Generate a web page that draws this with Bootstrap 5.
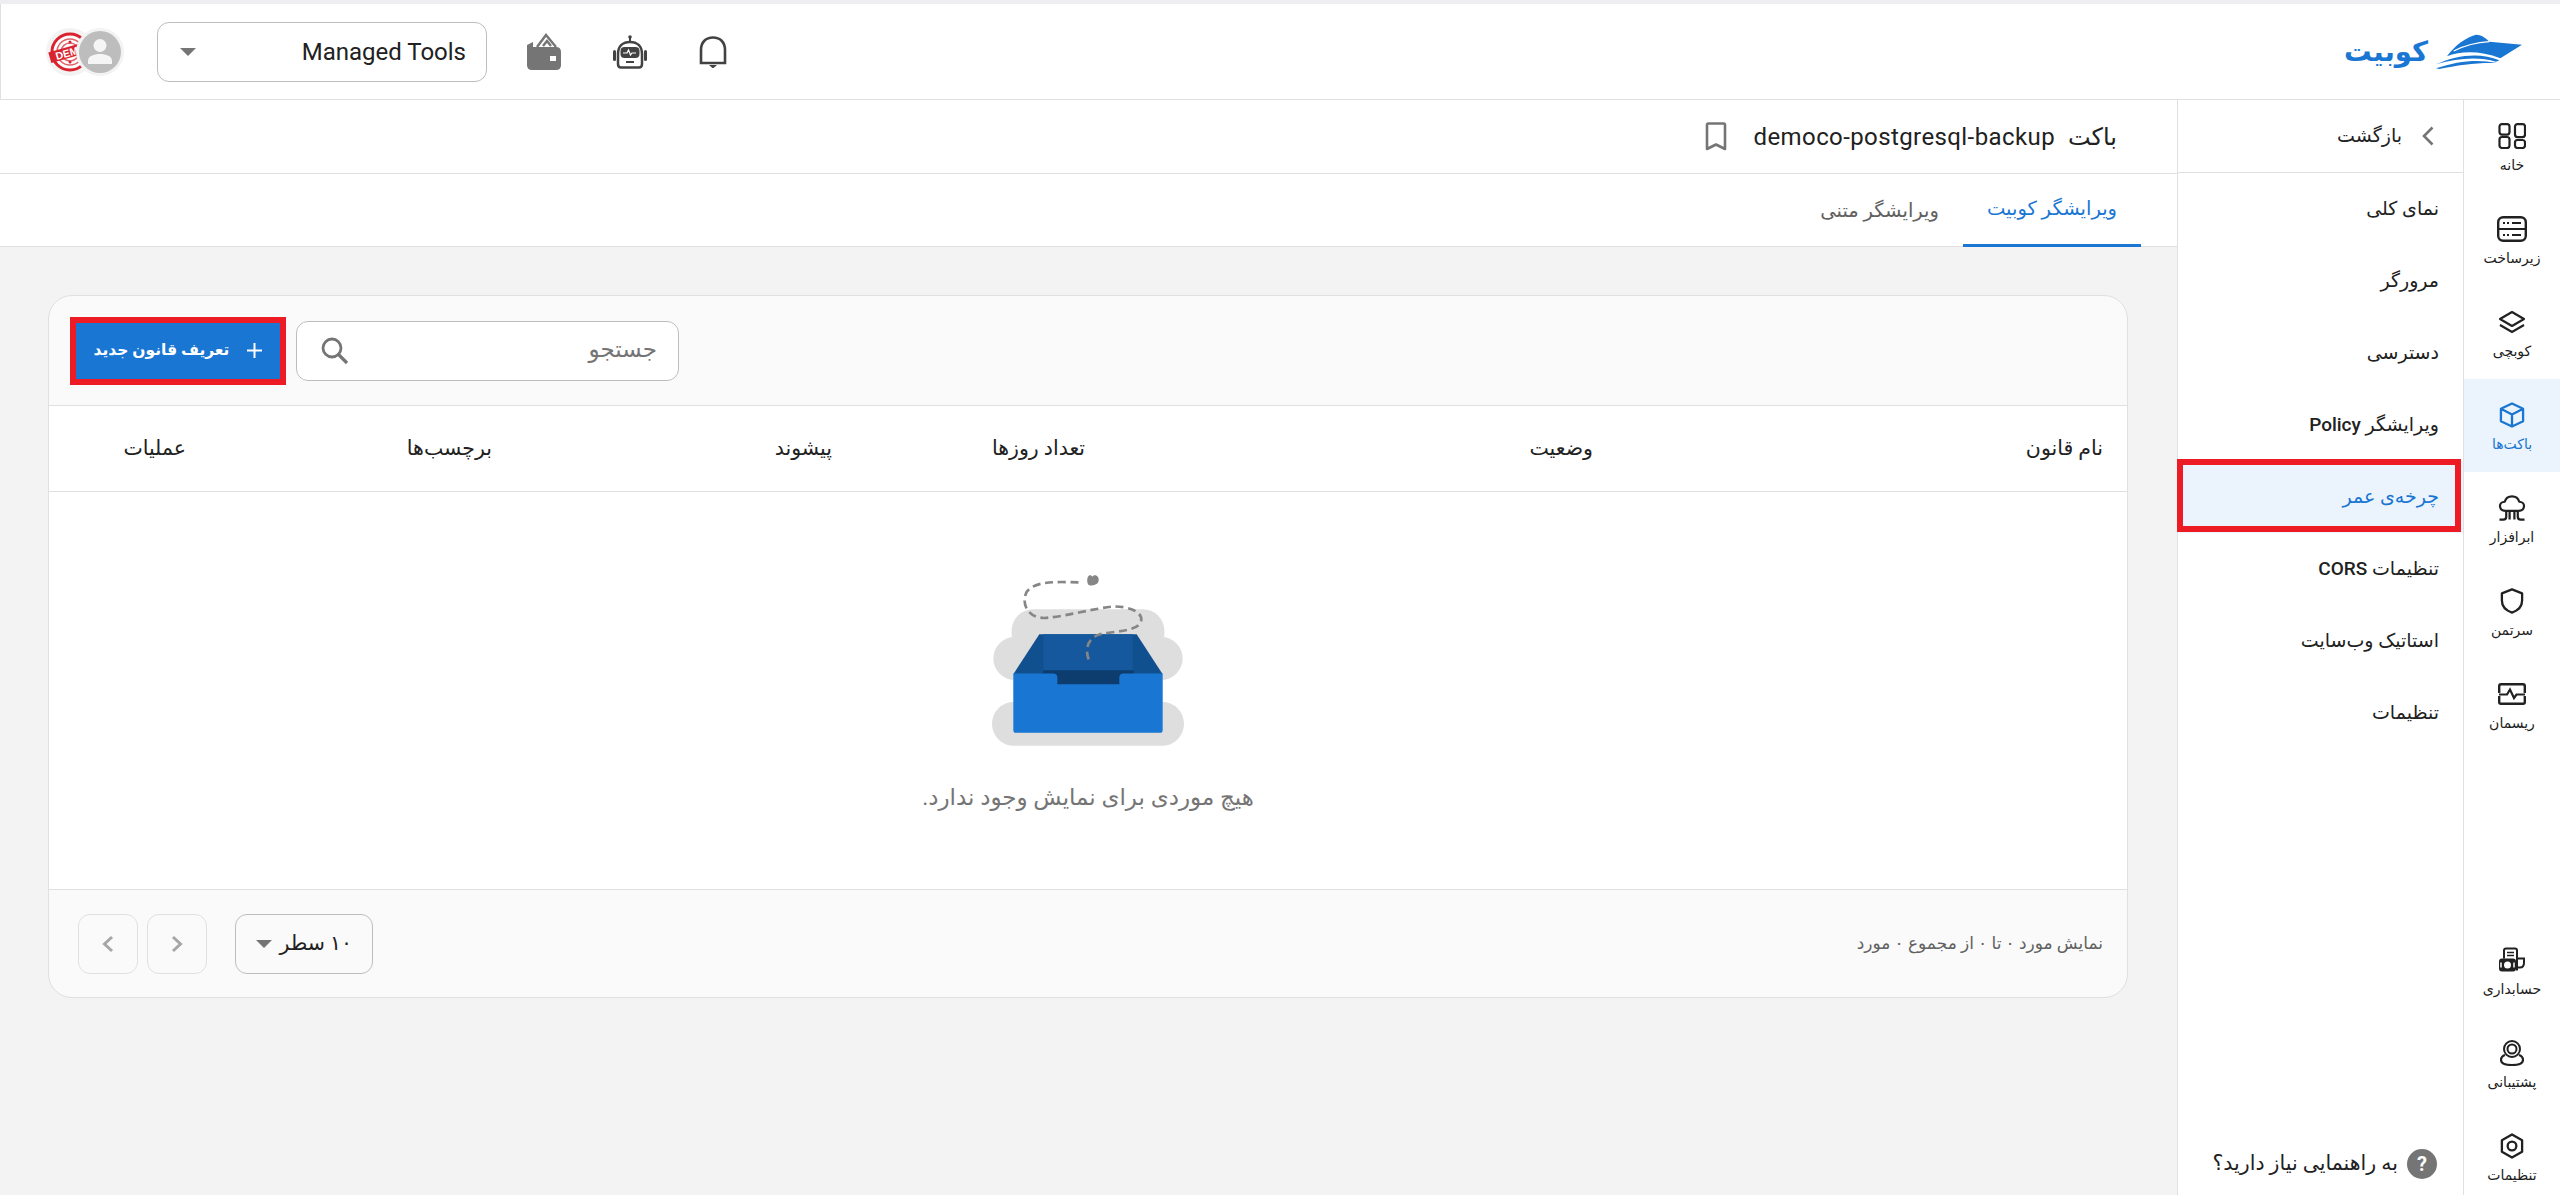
<!DOCTYPE html>
<html lang="fa" dir="rtl">
<head>
<meta charset="utf-8">
<title>باکت</title>
<link href="https://cdn.jsdelivr.net/npm/bootstrap@5.3.0/dist/css/bootstrap.min.css" rel="stylesheet">
<style>
html,body{height:100%;}
body{font-family:"Roboto","DejaVu Sans",sans-serif;color:#212121;background:#fff;overflow:hidden;font-size:16px;}
.top-strip{height:4px;background:#eeeef0;flex:none;}
.app-head{height:96px;flex:none;border:1px solid #e0e0e0;border-top:0;border-right:0;padding-right:38px;padding-left:45px;background:#fff;}
.brand{gap:8px;}
.brand-word{font-size:27.5px;font-weight:700;color:#1976d2;line-height:1;font-family:"DejaVu Sans",sans-serif;}
.ic-bell{margin-left:51px;}
.ic-bot{margin-left:51px;}
.ic-wallet{margin-left:40px;}
.tool-select{width:330px;height:60px;border:1px solid #bdbdbd;border-radius:12px;padding:0 20px 0 22px;font-size:24px;color:#212121;background:#fff;margin-left:33px;}
.caret{width:0;height:0;border-left:8px solid transparent;border-right:8px solid transparent;border-top:8px solid #757575;}
.ava-user{position:relative;z-index:1;}
.ava-demo{margin-right:-18px;}
.shell{min-height:0;}
.rail{width:97px;flex:none;border-left:1px solid #e0e0e0;height:1095px;}
.rail-item{height:93px;padding-top:23px;font-size:14px;color:#212121;text-decoration:none;text-align:center;line-height:1.2;display:block;}
.rail-item svg{display:block;margin:0 auto 8px;height:26px;}
.rail-item.is-on{background:#ebf3fc;color:#1976d2;}
.rail-low{margin-top:auto;margin-bottom:-8px;}
.side-menu{width:286px;flex:none;border-left:1px solid #e0e0e0;}
.back-row{height:73px;border-bottom:1px solid #e0e0e0;padding-right:29px;font-size:19px;color:#212121;gap:20px;}
.menu-link{height:72px;padding-right:24px;font-size:19px;font-weight:500;color:#212121;text-decoration:none;}
.menu-link.is-on{background:#ebf3fc;color:#1976d2;position:relative;}
.menu-link.is-on::after{content:"";position:absolute;inset:-2px 2px 1px -1px;border:6px solid #ed1c24;}
.help-row{margin-top:auto;margin-bottom:16px;padding-right:26px;font-size:20.5px;gap:9px;}
.help-dot{width:30px;height:30px;border-radius:50%;background:#757575;color:#fff;font-weight:700;font-size:20px;}
.work{min-width:0;background:#f3f3f3;}
.title-row{height:74px;background:#fff;border-bottom:1px solid #e0e0e0;padding-right:60px;font-size:24px;font-weight:400;letter-spacing:.4px;flex:none;}
.title-row .kind{margin-left:13px;letter-spacing:0;}
.title-row svg{margin-right:26px;}
.tab-row{height:73px;background:#fff;border-bottom:1px solid #e0e0e0;flex:none;padding-right:36px;}
.tab-on{height:73px;padding:0 24px;color:#1976d2;font-size:19.5px;border-bottom:3px solid #1976d2;}
.tab-off{height:73px;padding:0 24px;color:#616161;font-size:19.5px;}
.rule-card{margin:48px 49px 0 48px;border:1px solid #e0e0e0;border-radius:24px;overflow:hidden;background:#fafafa;height:703px;flex:none;}
.card-tools{height:110px;padding:0 21px;border-bottom:1px solid #e0e0e0;}
.tool-pair{gap:16px;}
.search-box{width:383px;height:60px;border:1px solid #bdbdbd;border-radius:12px;background:#fff;padding:0 21px 0 24px;color:#757575;font-size:23px;}
.new-btn{height:56px;width:204px;margin:0 0 0 6px;outline:6px solid #ed1c24;background:#1976d2;color:#fff;font-weight:700;font-size:15.5px;border:0;border-radius:0;gap:18px;}
.new-btn:hover{background:#1976d2;color:#fff;}
.rule-table{margin:0;background:#fff;table-layout:fixed;width:100%;}
.rule-table th{height:85px;vertical-align:middle;font-weight:500;font-size:20.5px;padding:0 24px;background:#fff;border-bottom:1px solid #e0e0e0;color:#212121;}
.col-a{width:510px;}.col-b{width:508px;}.col-c{width:253px;}.col-d{width:340px;}.col-e{width:306px;}.col-f{width:163px;}
.empty-zone{height:397px;background:#fff;padding-top:78px;}
.empty-zone svg{display:block;}
.empty-text{margin-top:34px;font-size:23px;color:#757575;}
.card-foot{height:109px;border-top:1px solid #e0e0e0;padding:0 24px 0 29px;}
.foot-note{font-size:17px;color:#616161;}
.rows-btn{width:138px;height:60px;border:1px solid #bdbdbd;border-radius:12px;padding:0 20px;font-size:20.5px;color:#212121;background:transparent;margin-left:28px;}
.pg-btn,.pg-btn:disabled{width:60px;height:60px;border:1px solid #e0e0e0;border-radius:12px;background:transparent;opacity:1;}
.pg-gap{gap:9px;}
</style>
</head>
<body class="d-flex flex-column">
<div class="top-strip"></div>
<header class="app-head d-flex align-items-center justify-content-between">
  <div class="brand d-flex align-items-center">
    <svg width="86" height="35" viewBox="825 105 258 105"><path fill="#1976d2" d="M858 172C880 140 915 115 945 107C965 108 975 118 985 128L1083 137L1018 178C960 155 900 155 858 172Z"/><path fill="none" stroke="#fff" stroke-width="4" d="M878 156C910 140 950 130 985 128"/><path fill="#1976d2" d="M825 196C890 166 960 160 1015 184L1005 188C950 172 890 178 825 196Z"/><path fill="#1976d2" d="M825 208C890 186 950 180 1007 192C950 190 890 198 835 210Z"/></svg>
    <span class="brand-word">کوبیت</span>
  </div>
  <div class="d-flex align-items-center">
    <svg class="ic-bell" width="28" height="32" viewBox="0 0 28 32"><path fill="none" stroke="#424242" stroke-width="2.6" d="M2 27V14C2 6 7 1.500 14 1.500S26 6 26 14V27Z"/><path fill="#424242" d="M10 29h8l-4 3.500z"/></svg>
    <svg class="ic-bot" width="36" height="34" viewBox="0 0 36 34"><circle cx="18" cy="2" r="1.800" fill="#424242"/><path stroke="#424242" stroke-width="2" d="M18 3v4"/><path fill="none" stroke="#424242" stroke-width="2.500" d="M6 19C6 11 11 7 18 7S30 11 30 19V29Q30 32.500 27 32.500H9Q6 32.500 6 29Z"/><rect x="1" y="15" width="3" height="11" rx="1.500" fill="#424242"/><rect x="32" y="15" width="3" height="11" rx="1.500" fill="#424242"/><rect x="8.500" y="12" width="19" height="11" rx="4" fill="#424242"/><path fill="none" stroke="#fff" stroke-width="1.200" d="M11 18h4l1.500-3 2 5 1.500-2h4"/><rect x="14" y="26" width="8" height="2" fill="#424242"/></svg>
    <svg class="ic-wallet" width="34" height="37" viewBox="0 0 34 37"><path fill="none" stroke="#757575" stroke-width="2.400" d="M10 14L19 2L29 14"/><path fill="none" stroke="#757575" stroke-width="2.400" d="M16 13L20 8L24 13"/><path fill="#757575" d="M0 12L6 9V14H29Q34 14 34 19V32Q34 37 29 37H5Q0 37 0 32Z"/><rect x="23" y="23" width="6" height="5" fill="#fff"/></svg>
    <button class="btn tool-select d-flex align-items-center justify-content-between" type="button"><span dir="ltr">Managed Tools</span><span class="caret"></span></button>
    <div class="d-flex align-items-center">
      <svg class="ava-user" width="48" height="48" viewBox="0 0 48 48"><circle cx="24" cy="24" r="24" fill="#f3f3f3"/><circle cx="24" cy="24" r="21" fill="#bdbdbd"/><circle cx="24" cy="17.500" r="6.500" fill="#f5f5f5"/><path fill="#f5f5f5" d="M12 36V33C12 28 18 26 24 26S36 28 36 33V36Z"/></svg>
      <svg class="ava-demo" width="48" height="48" viewBox="0 0 48 48"><circle cx="24" cy="24" r="24" fill="#f3f3f3"/><circle cx="24" cy="24" r="18" fill="#fff" stroke="#d9232e" stroke-width="3"/><circle cx="24" cy="24" r="13" fill="none" stroke="#e0656c" stroke-width="1.500"/><circle cx="24" cy="24" r="9" fill="none" stroke="#e0656c" stroke-width="1.500"/><circle cx="24" cy="14" r="1.500" fill="#d9232e"/><circle cx="24" cy="34" r="1.500" fill="#d9232e"/><g transform="rotate(-16 24 24)"><rect x="3" y="18.500" width="42" height="11" fill="#d9232e"/><text x="9" y="28" fill="#fff" font-size="10.500" font-weight="700" font-family="Liberation Sans" direction="ltr">DEMO</text></g></svg>
    </div>
  </div>
</header>
<div class="shell d-flex flex-grow-1">
  <nav class="rail d-flex flex-column">
    <a class="rail-item" href="#"><svg width="28" height="26" viewBox="0 0 28 26"><g fill="none" stroke="#212121" stroke-width="2.200"><rect x="1.500" y="1.100" width="10" height="10.500" rx="2.500"/><rect x="1.500" y="14" width="10" height="11" rx="2.500"/><rect x="17" y="1.100" width="10" height="13" rx="2.500"/><rect x="17" y="17" width="10" height="8" rx="2.500"/></g></svg>خانه</a>
    <a class="rail-item" href="#"><svg width="30" height="26" viewBox="0 0 30 26"><rect x="1.200" y="1.200" width="27.600" height="23.600" rx="5" fill="none" stroke="#212121" stroke-width="2.400"/><path stroke="#212121" stroke-width="2.200" d="M1 13h28M6 7h2M10 7h2M15 7h9M6 19h2M10 19h2M15 19h9"/></svg>زیرساخت</a>
    <a class="rail-item" href="#"><svg width="28" height="23" viewBox="0 0 28 23"><path fill="none" stroke="#212121" stroke-width="2.200" stroke-linejoin="round" d="M14 1.500L26 8.500L14 15.500L2 8.500Z"/><path fill="none" stroke="#212121" stroke-width="2.200" d="M2 14.500L14 21.500L26 14.500"/></svg>کوبچی</a>
    <a class="rail-item is-on" href="#"><svg width="26" height="27" viewBox="0 0 26 27"><path fill="none" stroke="#1976d2" stroke-width="2.400" stroke-linejoin="round" d="M13 1.500L24.500 7V20L13 25.500L1.500 20V7ZM1.500 7L13 13L24.500 7M13 13V25.500"/></svg>باکت‌ها</a>
    <a class="rail-item" href="#"><svg width="28" height="27" viewBox="0 0 28 27"><path fill="none" stroke="#212121" stroke-width="2.300" stroke-linejoin="round" d="M7 16.500C3.500 16.500 1.500 14 1.500 11.500S3.500 7 6.500 7C7.500 3.500 10.500 1.500 14 1.500S20.500 3.500 21.500 7C24.500 7 26.500 9 26.500 11.500S24.500 16.500 21 16.500Z"/><path fill="none" stroke="#212121" stroke-width="2.300" d="M1 25.500H5Q8 25.500 8 22.500V17M27 25.500H23Q20 25.500 20 22.500V17M11.500 17V25.500M16.500 17V25.500"/></svg>ابرافزار</a>
    <a class="rail-item" href="#"><svg width="24" height="27" viewBox="0 0 24 27"><path fill="none" stroke="#212121" stroke-width="2.400" stroke-linejoin="round" d="M12 1.500L22.500 5.500V13C22.500 19 18 23.500 12 25.500C6 23.500 1.500 19 1.500 13V5.500Z"/></svg>سرتمن</a>
    <a class="rail-item" href="#"><svg width="28" height="22" viewBox="0 0 28 22"><path fill="none" stroke="#212121" stroke-width="2.400" d="M1.200 10V3Q1.200 1.200 3 1.200H25Q26.800 1.200 26.800 3V10M1.200 13V19Q1.200 20.800 3 20.800H25Q26.800 20.800 26.800 19V13"/><path fill="none" stroke="#212121" stroke-width="2.200" d="M1 11.500H9L12 6.500L16 15L18.500 11.500H27"/></svg>ریسمان</a>
    <div class="rail-low">
    <a class="rail-item" href="#"><svg width="28" height="25" viewBox="0 0 28 25"><path fill="none" stroke="#212121" stroke-width="2" d="M6 11V3Q6 1 8 1H17Q19 1 19 3V23M19 11H26V15Q26 20 22 20H19"/><path stroke="#212121" stroke-width="1.600" d="M9 5h7M9 8h7"/><rect x="1" y="11" width="17" height="13" rx="3" fill="#212121"/><circle cx="9.500" cy="17.500" r="3.500" fill="#fff"/><path stroke="#fff" stroke-width="1.500" d="M3 15v5M16 15v5"/></svg>حسابداری</a>
    <a class="rail-item" href="#"><svg width="24" height="26" viewBox="0 0 24 26"><circle cx="12" cy="9" r="8" fill="none" stroke="#212121" stroke-width="2"/><circle cx="12" cy="9" r="4.500" fill="none" stroke="#212121" stroke-width="2"/><path fill="none" stroke="#212121" stroke-width="2.200" d="M5 15C2 16 1 18 1 20C1 23 4 25 12 25S23 23 23 20C23 18 22 16 19 15"/></svg>پشتیبانی</a>
    <a class="rail-item" href="#"><svg width="24" height="27" viewBox="0 0 24 27"><path fill="none" stroke="#212121" stroke-width="2.400" stroke-linejoin="round" d="M12 1.500L22.500 7.500V19.500L12 25.500L1.500 19.500V7.500Z"/><circle cx="12" cy="13.500" r="4.500" fill="none" stroke="#212121" stroke-width="2.400"/></svg>تنظیمات</a>
    </div>
  </nav>
  <aside class="side-menu d-flex flex-column">
    <div class="back-row d-flex align-items-center"><svg width="12" height="20" viewBox="0 0 12 20"><path fill="none" stroke="#757575" stroke-width="2.600" d="M10.500 1.500L2 10L10.500 18.500"/></svg><span>بازگشت</span></div>
    <a class="menu-link d-flex align-items-center" href="#">نمای کلی</a>
    <a class="menu-link d-flex align-items-center" href="#">مرورگر</a>
    <a class="menu-link d-flex align-items-center" href="#">دسترسی</a>
    <a class="menu-link d-flex align-items-center" href="#">ویرایشگر Policy</a>
    <a class="menu-link d-flex align-items-center is-on" href="#">چرخه‌ی عمر</a>
    <a class="menu-link d-flex align-items-center" href="#">تنظیمات CORS</a>
    <a class="menu-link d-flex align-items-center" href="#">استاتیک وب‌سایت</a>
    <a class="menu-link d-flex align-items-center" href="#">تنظیمات</a>
    <div class="help-row d-flex align-items-center"><span class="help-dot d-flex align-items-center justify-content-center">?</span><span>به راهنمایی نیاز دارید؟</span></div>
  </aside>
  <main class="work flex-grow-1 d-flex flex-column">
    <div class="title-row d-flex align-items-center"><span class="kind">باکت</span><span dir="ltr">democo-postgresql-backup</span><svg width="24" height="30" viewBox="0 0 24 30"><path fill="none" stroke="#757575" stroke-width="2.600" stroke-linejoin="round" d="M3 3Q3 1.500 4.500 1.500H19.500Q21 1.500 21 3V27L12 22.500L3 27Z"/></svg></div>
    <div class="tab-row d-flex"><div class="tab-on d-flex align-items-center">ویرایشگر کوبیت</div><div class="tab-off d-flex align-items-center">ویرایشگر متنی</div></div>
    <section class="rule-card">
      <div class="card-tools d-flex align-items-center justify-content-between">
        <span></span>
        <div class="tool-pair d-flex align-items-center">
          <div class="search-box d-flex align-items-center justify-content-between"><span>جستجو</span><svg width="28" height="28" viewBox="0 0 28 28"><circle cx="11" cy="11" r="9" fill="none" stroke="#757575" stroke-width="2.800"/><path stroke="#757575" stroke-width="3.200" d="M17.500 17.500L26 26"/></svg></div>
          <button class="btn new-btn d-flex align-items-center justify-content-center" type="button"><svg width="15" height="15" viewBox="0 0 15 15"><path stroke="#fff" stroke-width="2" d="M7.500 0v15M0 7.500h15"/></svg><span>تعریف قانون جدید</span></button>
        </div>
      </div>
      <table class="table rule-table">
        <colgroup><col class="col-a"><col class="col-b"><col class="col-c"><col class="col-d"><col class="col-e"><col class="col-f"></colgroup>
        <thead><tr><th>نام قانون</th><th>وضعیت</th><th>تعداد روزها</th><th>پیشوند</th><th>برچسب‌ها</th><th>عملیات</th></tr></thead>
      </table>
      <div class="empty-zone d-flex flex-column align-items-center">
        <svg width="192" height="177" viewBox="336 90 576 530">
          <path fill="#dedede" d="M460 207H788A65 65 0 0 1 853 272V290H843A65 65 0 0 1 843 420H848V485H846A66 66 0 0 1 846 617H402A66 66 0 0 1 402 485H400V420H405A65 65 0 0 1 405 290H395V272A65 65 0 0 1 460 207Z"/>
          <path fill="#11508f" d="M400 402L478 282H770L848 402Z"/>
          <path fill="#15589e" d="M490 282H758V392H490Z"/>
          <path fill="#0d3c6e" d="M490 390H760L770 440H480Z"/>
          <path fill="#1976d2" d="M400 400H520Q532 400 532 412V432H718V412Q718 400 730 400H848V570Q848 578 840 578H408Q400 578 400 570Z"/>
          <path fill="none" stroke="#868686" stroke-width="8" stroke-dasharray="24 14" d="M626 358C612 320 630 290 660 282C700 273 770 275 783 245C792 215 745 198 700 199C640 205 560 228 500 233C450 238 420 195 440 155C465 120 540 125 600 127"/>
          <path fill="#868686" d="M622 125C620 108 630 100 637 110C645 100 658 108 656 122C654 134 640 136 632 136C626 136 622 132 622 125Z"/>
        </svg>
        <div class="empty-text">هیچ موردی برای نمایش وجود ندارد.</div>
      </div>
      <div class="card-foot d-flex align-items-center justify-content-between">
        <span class="foot-note">نمایش مورد ۰ تا ۰ از مجموع ۰ مورد</span>
        <div class="d-flex align-items-center">
          <button class="btn rows-btn d-flex align-items-center justify-content-between" type="button"><span>۱۰ سطر</span><span class="caret"></span></button>
          <div class="d-flex pg-gap">
            <button class="btn pg-btn d-flex align-items-center justify-content-center" type="button" disabled><svg width="12" height="18" viewBox="0 0 12 18"><path fill="none" stroke="#a6a6a6" stroke-width="3" d="M2 2L9.500 9L2 16"/></svg></button>
            <button class="btn pg-btn d-flex align-items-center justify-content-center" type="button" disabled><svg width="12" height="18" viewBox="0 0 12 18"><path fill="none" stroke="#a6a6a6" stroke-width="3" d="M10 2L2.500 9L10 16"/></svg></button>
          </div>
        </div>
      </div>
    </section>
  </main>
</div>
<script src="https://cdn.jsdelivr.net/npm/bootstrap@5.3.0/dist/js/bootstrap.bundle.min.js"></script>
</body>
</html>
